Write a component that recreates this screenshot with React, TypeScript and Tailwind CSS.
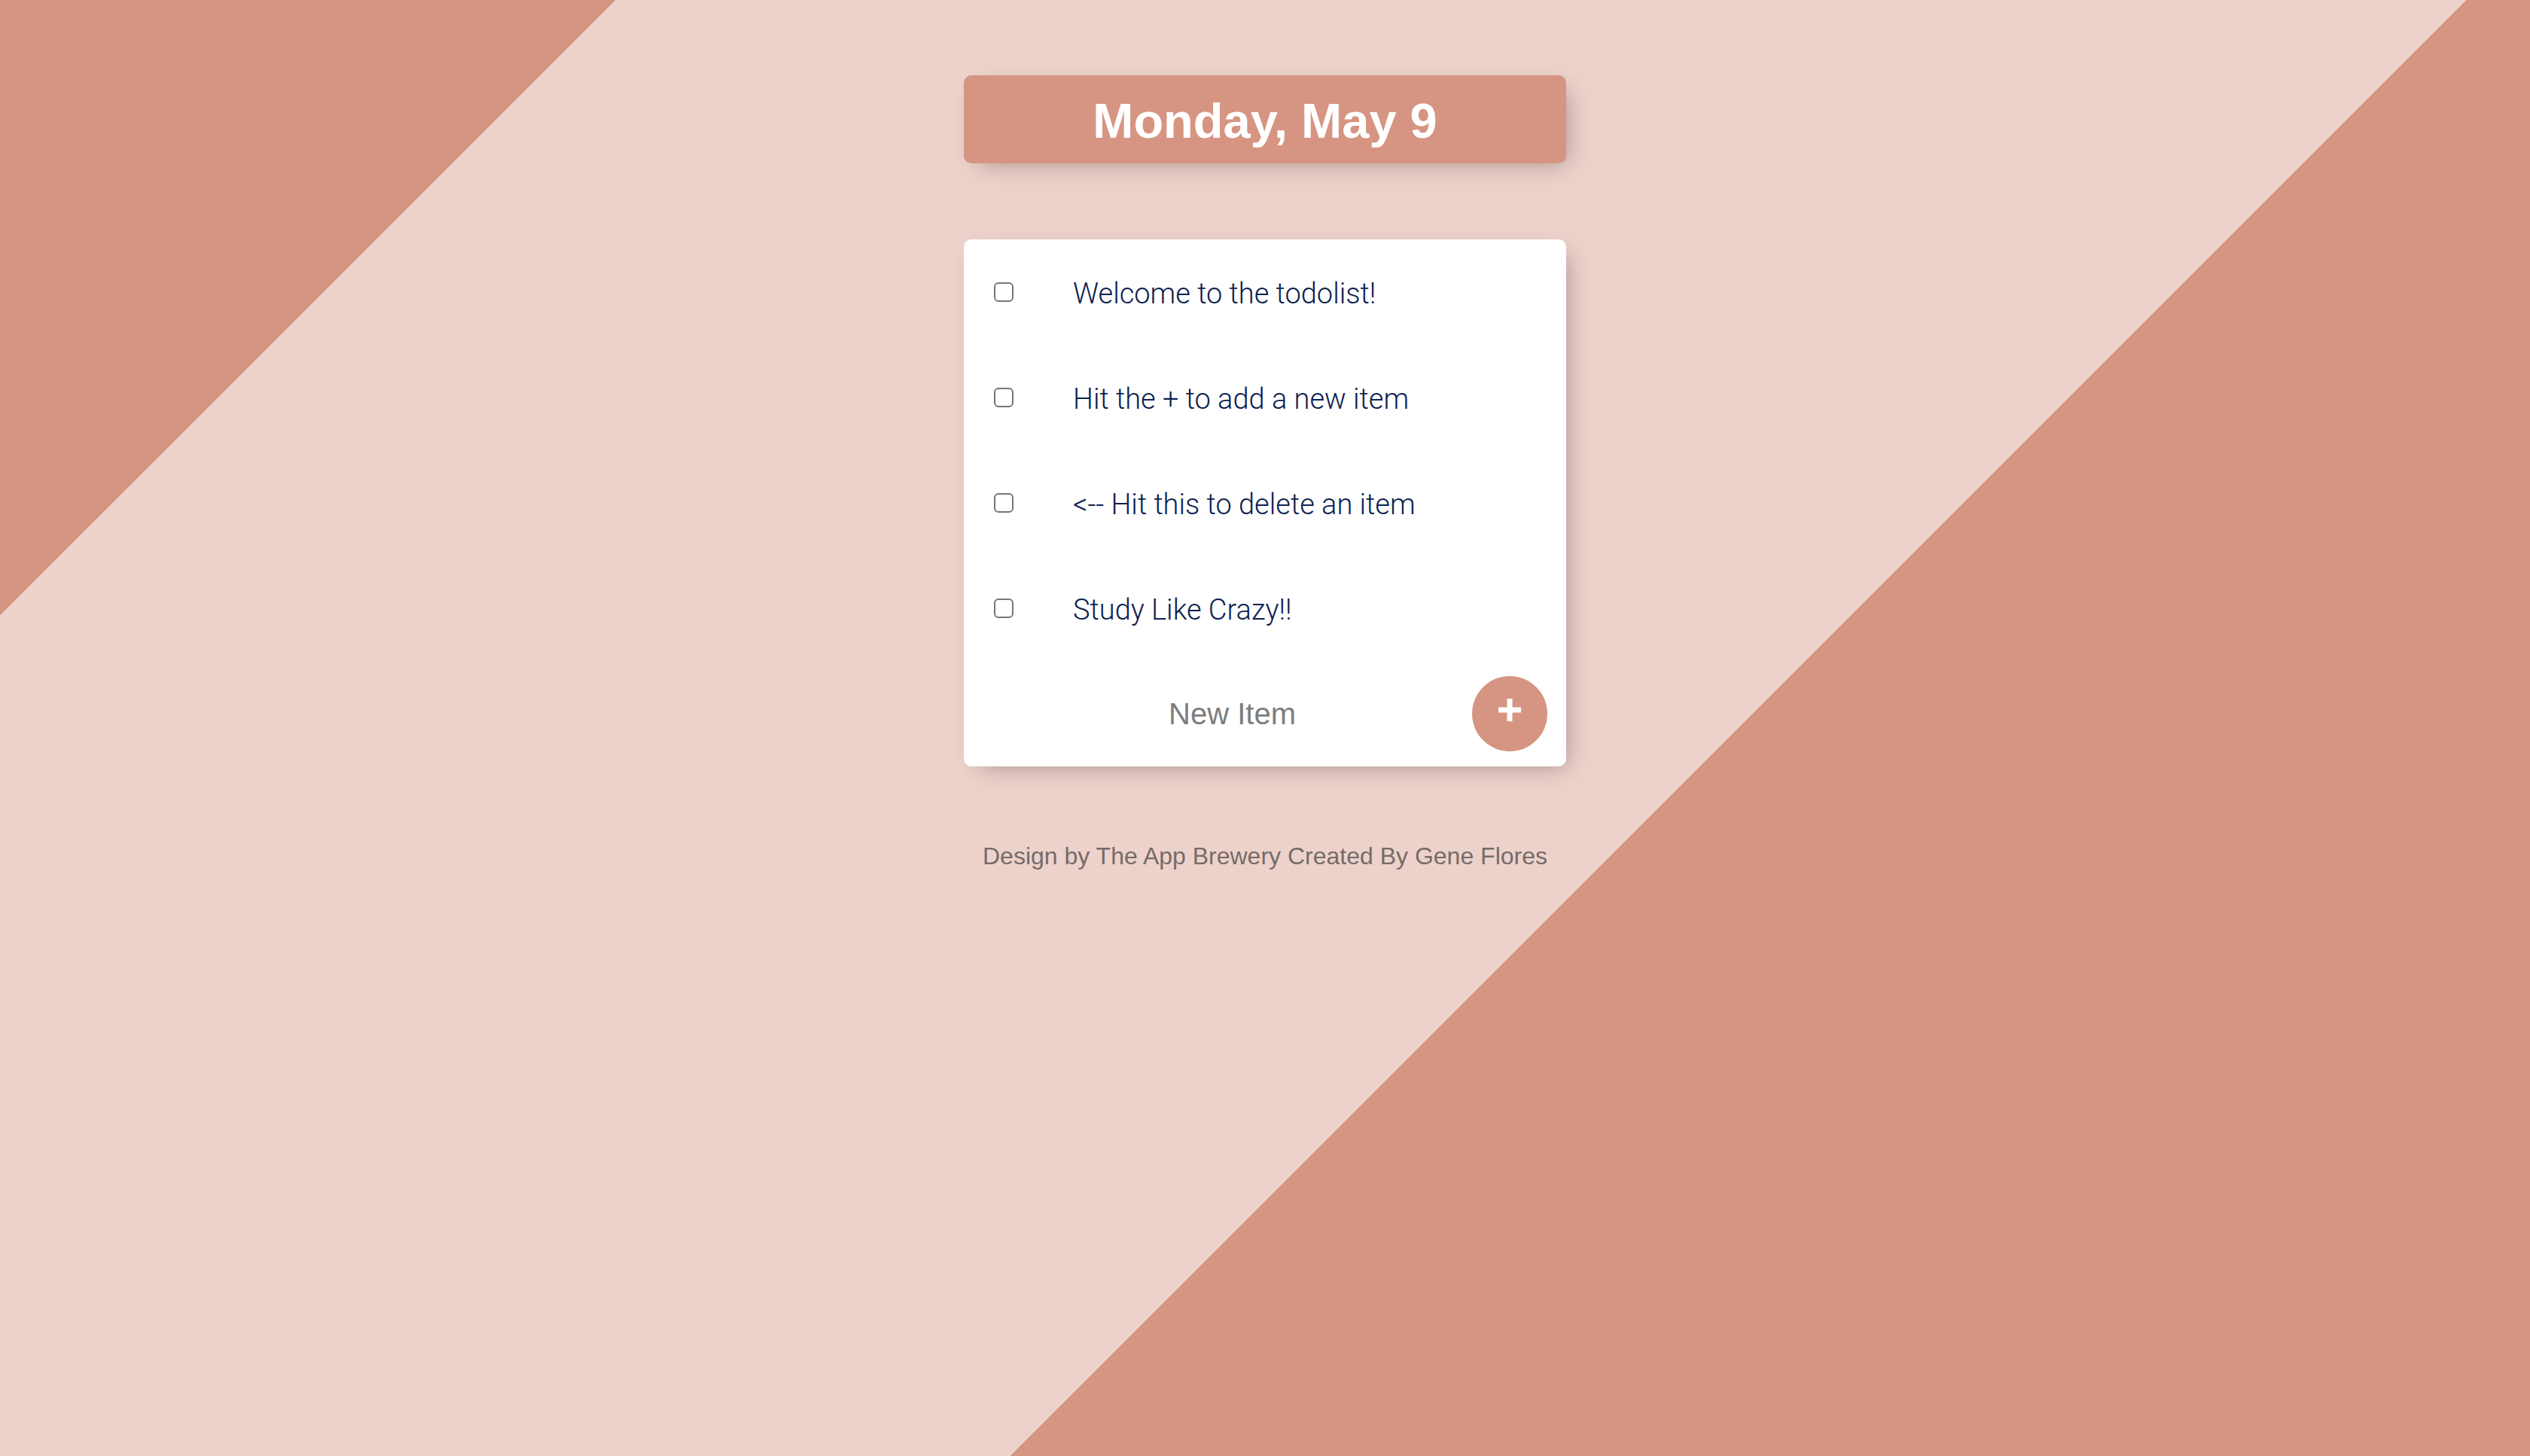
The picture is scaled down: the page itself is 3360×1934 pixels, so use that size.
import React, { useState } from 'react';

interface Item {
  id: number;
  text: string;
  done: boolean;
}

const initialItems: Item[] = [
  { id: 1, text: 'Welcome to the todolist!', done: false },
  { id: 2, text: 'Hit the + to add a new item', done: false },
  { id: 3, text: '<-- Hit this to delete an item', done: false },
  { id: 4, text: 'Study Like Crazy!!', done: false },
];

const App: React.FC = () => {
  const [items, setItems] = useState<Item[]>(initialItems);
  const [draft, setDraft] = useState('');

  const toggle = (id: number) => {
    setItems(items.map(i => (i.id === id ? { ...i, done: !i.done } : i)));
  };

  const addItem = (e: React.FormEvent) => {
    e.preventDefault();
    if (!draft.trim()) return;
    setItems([...items, { id: Date.now(), text: draft, done: false }]);
    setDraft('');
  };

  return (
    <div className="w-full h-screen overflow-hidden flex flex-col items-center pt-[100px] bg-[linear-gradient(135deg,#d69582_578px,#edd2cb_578px,#edd2cb_2316px,#d69582_2316px)] font-['Liberation_Sans',Arial,sans-serif]">
      <header className="w-[800px] h-[117px] rounded-[10px] bg-[#d69582] shadow-[10px_10px_30px_-10px_rgba(0,0,0,0.3)] flex items-center justify-center pt-[4px]">
        <h1 className="text-[65px] font-bold text-white leading-none">Monday, May 9</h1>
      </header>

      <div className="mt-[101px] w-[800px] bg-white rounded-[10px] shadow-[10px_10px_30px_-10px_rgba(0,0,0,0.3)]">
        {items.map(item => (
          <div key={item.id} className="h-[140px] flex items-center pl-[40px]">
            <input
              type="checkbox"
              checked={item.done}
              onChange={() => toggle(item.id)}
              className="appearance-none shrink-0 w-[26px] h-[26px] border-2 border-[#767676] rounded-[6px] bg-white checked:bg-[#d69582] checked:border-[#d69582]"
            />
            <p
              className={
                item.done
                  ? "ml-[79px] mt-[4px] text-[38px] font-light text-[#a0a0a0] line-through font-['Roboto',sans-serif]"
                  : "ml-[79px] mt-[4px] text-[38px] font-light text-[#0c2150] font-['Roboto',sans-serif]"
              }
            >
              {item.text}
            </p>
          </div>
        ))}

        <form onSubmit={addItem} className="h-[140px] flex items-center">
          <input
            type="text"
            value={draft}
            onChange={e => setDraft(e.target.value)}
            placeholder="New Item"
            className="ml-[40px] mr-[2px] flex-1 min-w-0 h-[60px] bg-transparent border-none outline-none text-center text-[40px] text-[#0c2150] placeholder:text-[#7d7d7d]"
          />
          <button
            type="submit"
            className="shrink-0 mr-[25px] w-[100px] h-[100px] rounded-full bg-[#d69582] flex items-center justify-center"
          >
            <svg width="30" height="30" viewBox="0 0 30 30" className="mb-[10px]">
              <rect x="0" y="11.5" width="30" height="7" fill="#ffffff" />
              <rect x="11.5" y="0" width="7" height="30" fill="#ffffff" />
            </svg>
          </button>
        </form>
      </div>

      <footer className="mt-[95px] text-[32px] text-[#766b68]">
        Design by The App Brewery Created By Gene Flores
      </footer>
    </div>
  );
};

export default App;
